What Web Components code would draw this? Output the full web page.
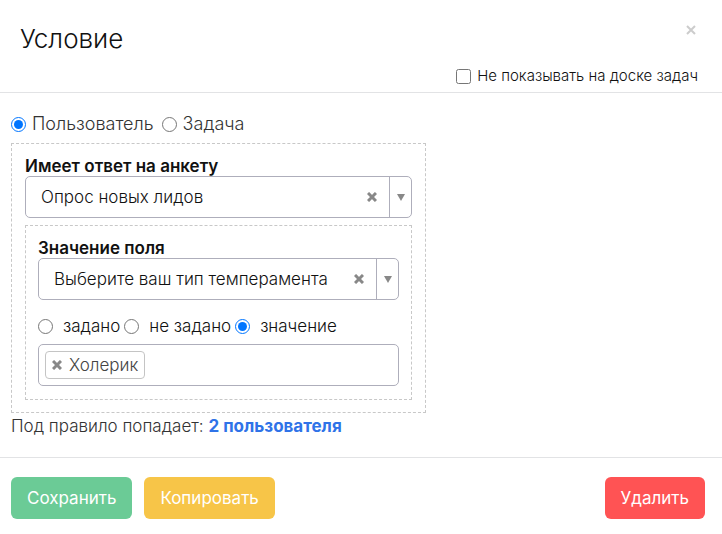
<!DOCTYPE html>
<html lang="ru">
<head>
<meta charset="utf-8">
<meta name="viewport" content="width=device-width, initial-scale=1">
<title>Условие</title>
<style>
html{background:#fff}
body{margin:0;font:300 17px/24px Inter,"Open Sans",sans-serif;color:#111;--line:#e2e3e5;--field:#aeaebb;--dash:#c8c8c8}
rule-box rule-box{padding:12px 12px 13px}
</style>
</head>
<body>
<condition-dialog heading="Условие">
  <check-box slot="option" label="Не показывать на доске задач"></check-box>
  <radio-group name="subject" legend="Объект условия" options="Пользователь|Задача" selected="0"></radio-group>
  <rule-box>
    <select-field label="Имеет ответ на анкету" value="Опрос новых лидов"></select-field>
    <rule-box>
      <select-field label="Значение поля" value="Выберите ваш тип темперамента"></select-field>
      <radio-group class="compact" name="mode" legend="Значение" options="задано|не задано|значение" selected="2"></radio-group>
      <tag-field value="Холерик"></tag-field>
    </rule-box>
  </rule-box>
  <match-count label="Под правило попадает:" value="2 пользователя"></match-count>
  <action-button slot="actions" class="save" label="Сохранить"></action-button>
  <action-button slot="actions" class="copy" label="Копировать"></action-button>
  <action-button slot="actions" class="delete" label="Удалить"></action-button>
</condition-dialog>
<script>
const CROSS = '<svg width="10" height="10" viewBox="0 0 10 10" aria-hidden="true"><path d="M1 1 9 9M9 1 1 9" fill="none" stroke="currentColor" stroke-width="3"/></svg>';
const THIN_CROSS = '<svg width="10" height="10" viewBox="0 0 10 10" aria-hidden="true"><path d="M1 1 9 9M9 1 1 9" fill="none" stroke="currentColor" stroke-width="2"/></svg>';
const RESET = '*{box-sizing:border-box}button,input,select{font:inherit;color:inherit;margin:0}button{border:0;background:none;padding:0;cursor:pointer}svg{display:block}';

function define(name, render) {
  customElements.define(name, class extends HTMLElement {
    constructor() { super(); this.attachShadow({ mode: 'open' }); }
    connectedCallback() {
      this.shadowRoot.innerHTML = render(this);
    }
  });
}
const attr = (el, name) => el.getAttribute(name) || '';

define('condition-dialog', el => `
<style>${RESET}
:host{display:block}
header{display:grid;grid-template-columns:1fr auto;row-gap:10px;padding:20px 24px 8px 20px;border-bottom:1px solid var(--line)}
h1{margin:0;font-size:26px;line-height:38px;font-weight:300}
.close{justify-self:end;align-self:start;padding:5px 2px;color:#ccc}
.option{grid-column:1/-1;justify-self:end}
main{padding:19px 11px}
footer{display:flex;gap:12px;padding:19px 17px 15px 11px;border-top:1px solid var(--line)}
</style>
<header><h1>${attr(el, 'heading')}</h1><button class="close" type="button" aria-label="Закрыть">${THIN_CROSS}</button><div class="option"><slot name="option"></slot></div></header>
<main><slot></slot></main>
<footer><slot name="actions"></slot></footer>`);

define('check-box', el => `
<style>${RESET}
:host{display:block;font-size:15px;line-height:16px}
label{display:flex;align-items:center;gap:6px}
input{width:15px;height:15px}
</style>
<label><input type="checkbox">${attr(el, 'label')}</label>`);

define('radio-group', el => `
<style>${RESET}
:host{display:block;font-size:18px}
fieldset{display:flex;flex-wrap:wrap;gap:8px;margin:0;padding:0;border:0;min-width:0}
label{display:flex;align-items:center;gap:6px;color:#333}
input{width:15px;height:15px;accent-color:#0075ff}
:host(.compact){padding:14px 0 6px;font-size:17px}
:host(.compact) fieldset{gap:4px}
:host(.compact) label{gap:10px;color:#111}
</style>
<fieldset aria-label="${attr(el, 'legend')}">${attr(el, 'options').split('|').map((t, i) =>
  `<label><input type="radio" name="${attr(el, 'name')}"${String(i) === attr(el, 'selected') ? ' checked' : ''}>${t}</label>`).join('')}</fieldset>`);

define('rule-box', () => `
<style>${RESET}
:host{display:block;max-width:415px;margin-top:7px;padding:12px 13px;border:1px dashed var(--dash);box-sizing:border-box}
</style><slot></slot>`);

define('select-field', el => `
<style>${RESET}
:host{display:block}
label{display:block;line-height:20px;font-weight:600}
.box{display:grid;grid-template-columns:1fr auto 22px;align-items:center;height:42px;border:1px solid var(--field);border-radius:5px}
select{grid-area:1/1/2/4;width:100%;height:100%;padding:0 52px 0 15px;border:0;border-radius:5px;background:none;appearance:none}
.clear{grid-area:1/2;padding:6px 12px;color:#888;z-index:1}
.arrow{grid-area:1/3;align-self:stretch;display:grid;place-items:center;border-left:1px solid var(--field);color:#888;pointer-events:none}
</style>
<label for="s">${attr(el, 'label')}</label>
<div class="box"><select id="s"><option>${attr(el, 'value')}</option></select>
<button class="clear" type="button" aria-label="Очистить">${CROSS}</button>
<span class="arrow"><svg width="8" height="7" viewBox="0 0 8 7"><path d="M0 0H8L4 7Z" fill="currentColor"/></svg></span></div>`);

define('tag-field', el => `
<style>${RESET}
:host{display:block}
.box{display:flex;align-items:center;height:42px;padding:0 6px;border:1px solid var(--field);border-radius:5px}
.tag{display:flex;align-items:center;gap:7px;height:28px;padding:0 6px;border:1px solid #c4c4c4;border-radius:4px;color:#444}
button{color:#888}
input{flex:1;min-width:0;border:0;outline:0;background:none;padding:0 6px}
</style>
<div class="box"><span class="tag"><button type="button" aria-label="Удалить значение">${CROSS}</button>${attr(el, 'value')}</span><input type="text" aria-label="Добавить значение"></div>`);

define('match-count', el => `
<style>${RESET}
:host{display:block;padding-top:1px;color:#333}
a{color:#2f73e8;font-weight:700;text-decoration:none}
</style>${attr(el, 'label')} <a href="#">${attr(el, 'value')}</a>`);

define('action-button', el => `
<style>${RESET}
:host{display:block}
:host(.save){--fill:#6bcb96}
:host(.copy){--fill:#f7c548}
:host(.delete){--fill:#ff5354;margin-left:auto}
button{height:42px;padding:0 16px;border-radius:6px;background:var(--fill);color:#fff;font-weight:400}
</style><button type="button">${attr(el, 'label')}</button>`);
</script>
</body>
</html>
